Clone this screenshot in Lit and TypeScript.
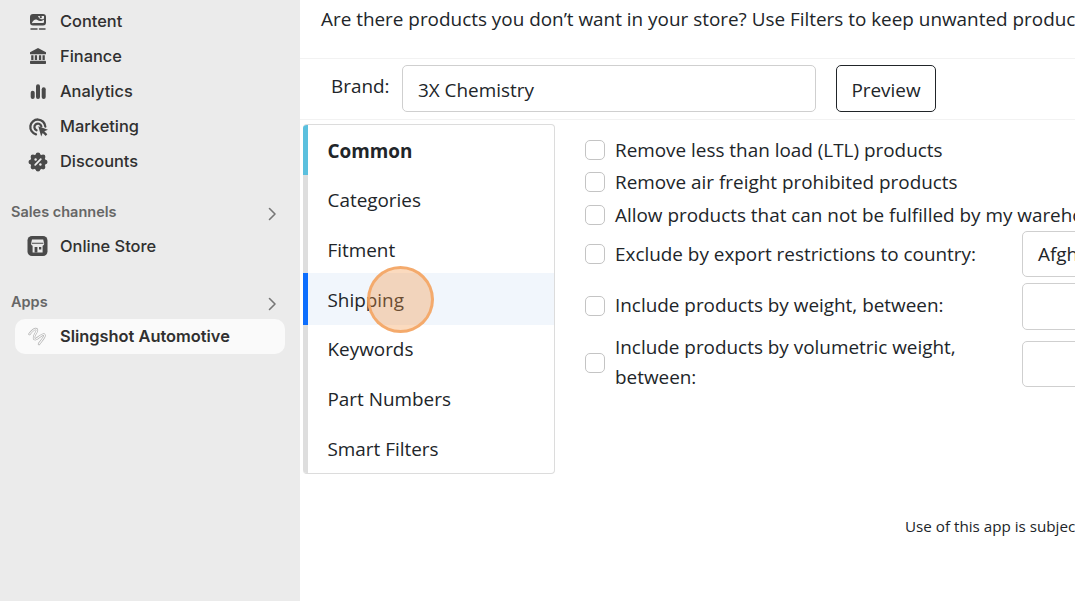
import { LitElement, html, css, svg } from "lit";
import { customElement } from "lit/decorators.js";

const DARK = "#4a4a4a";
const bumps = [0, 45, 90, 135, 180, 225, 270, 315].map((a) => {
  const r = (a * Math.PI) / 180;
  return svg`<circle cx="${10 + 7.2 * Math.cos(r)}" cy="${11 + 7.2 * Math.sin(r)}" r="2.3" fill="${DARK}"/>`;
});

const icons: Record<string, any> = {
  content: svg`<rect x="2" y="3" width="16" height="11.500" rx="3" fill="${DARK}"/><path fill="#ebebeb" d="M4 11.500c1.500-2.500 3-3.500 4.500-3 1.500.5 2 1.500 3.500 1.500s2.500-.5 4-1.500v2c0 1-.5 1.500-1.500 1.500h-9C4.500 12.500 4 12.200 4 11.500Z"/><path fill="#ebebeb" d="M10 5h6v2.500c-1 .8-2 1-3 .8-1.500-.3-2.500-1.800-3-3.300Z"/><circle cx="12.800" cy="6.200" r="1.100" fill="${DARK}"/><path stroke="${DARK}" stroke-width="1.500" stroke-linecap="round" d="M3 18h6M11.500 18h5.500"/>`,
  finance: svg`<path fill="${DARK}" d="M10 2 18 6.300V8.300H2V6.300L10 2ZM3.200 9.300h2.300v4.700H3.200zM6.800 9.300h2.300v4.700H6.800zM10.900 9.300h2.300v4.700h-2.300zM14.500 9.300h2.300v4.700h-2.300z"/><rect x="2" y="14.800" width="16" height="3.200" rx=".8" fill="${DARK}"/>`,
  analytics: svg`<rect x="2.700" y="9.700" width="4" height="8.300" rx="2" fill="${DARK}"/><rect x="8" y="3.300" width="4" height="14.700" rx="2" fill="${DARK}"/><rect x="13.700" y="6.300" width="4" height="11.700" rx="2" fill="${DARK}"/>`,
  marketing: svg`<path fill="none" stroke="${DARK}" stroke-width="2.300" stroke-linecap="round" d="M8 18.300A7.500 7.500 0 1 1 17.300 10.500M8.500 14.300a3.500 3.500 0 1 1 4.800-4"/><path fill="${DARK}" d="M10.300 10.300 20 13.800l-3.700 1.500 3 3-1.600 1.600-3-3-1.500 3.700Z"/>`,
  discounts: svg`<circle cx="10" cy="11" r="7.800" fill="${DARK}"/>${bumps}<path stroke="#ebebeb" stroke-width="1.800" stroke-linecap="round" d="M12.800 8.200l-5.600 5.600"/><circle cx="7.600" cy="8.500" r="1.200" fill="#ebebeb"/><circle cx="12.400" cy="13.500" r="1.200" fill="#ebebeb"/>`,
  store: svg`<rect x="-.5" y="0" width="20" height="20" rx="4.500" fill="${DARK}"/><path fill="#ebebeb" d="M4 3.500h11.200l1 4.200a2.300 2.300 0 0 1-1.600 2.100V16.500H4.600V9.800A2.300 2.300 0 0 1 3 7.700L4 3.500Z"/><path fill="${DARK}" d="M6.600 11h2.800v5.500H6.600zM11 11h2.300v2.500H11zM3.800 6.700h11.600v1H3.800z"/>`,
  app: svg`<path fill="none" stroke="#b0b0b0" stroke-width="2.400" stroke-linecap="round" stroke-linejoin="round" d="M1.500 8C4 5 6.500 2.500 8 3c2 .5.500 3-1 5.500C5.500 11 5.500 14 8 13c3-1.500 6-5 8-4.500 2 1-2 5.500-5 9.500"/><path fill="none" stroke="#fafafa" stroke-width="1.100" stroke-linecap="round" stroke-linejoin="round" d="M1.500 8C4 5 6.500 2.500 8 3c2 .5.500 3-1 5.500C5.500 11 5.500 14 8 13c3-1.500 6-5 8-4.500 2 1-2 5.500-5 9.500"/>`,
};

@customElement("app-root")
export class AppRoot extends LitElement {
  static styles = css`
    :host { display: block; width: 1075px; height: 601px; overflow: hidden; position: relative; background: #fff; }
    .page { display: flex; height: 601px; }
    .side { width: 300px; flex: none; background: #ebebeb; font-family: Inter, sans-serif; font-size: 16.400px; color: #303030; padding-top: 3px; box-sizing: border-box; font-weight: 450; }
    .item { display: flex; align-items: center; height: 35px; padding-left: 28px; gap: 12px; }
    .item svg { width: 20px; height: 20px; flex: none; overflow: visible; }
    .head { display: flex; align-items: center; justify-content: space-between; height: 34px; padding: 0 21px 0 11px; font-size: 14.500px; font-weight: 600; color: #666; }
    .head svg { width: 14px; height: 14px; margin-top: 5px; }
    .h1 { margin-top: 16px; }
    .h2 { margin-top: 21px; }
    .active { margin: 1px 15px 0; height: 35px; padding: 0 0 2px 13px; box-sizing: border-box; background: #fafafa; border-radius: 10px; font-weight: 600; gap: 12px; }
    .main { flex: 1; min-width: 0; font-family: "Open Sans", sans-serif; color: #212529; font-size: 18.900px; position: relative; white-space: nowrap; overflow: hidden; }
    .intro { height: 59px; padding: 5px 0 0 21px; box-sizing: border-box; line-height: 28px; border-bottom: 1px solid #f2f2f2; }
    .brand { display: flex; height: 61px; border-bottom: 1px solid #f2f2f2; box-sizing: border-box; align-items: flex-start; padding: 6px 0 0 31px; }
    .brand label { margin-top: 7px; width: 71px; flex: none; line-height: 28px; }
    .input { border: 1px solid #cfcfcf; border-radius: 5px; box-sizing: border-box; display: flex; align-items: center; }
    .brand .input { width: 414px; height: 47px; padding: 2px 0 0 15px; }
    .btn { margin-left: 20px; width: 100px; height: 47px; border: 1px solid #212529; border-radius: 5px; box-sizing: border-box; display: flex; align-items: center; justify-content: center; padding-top: 2px; }
    .body { display: flex; padding: 4px 0 0 3px; }
    .tabs { width: 252px; height: 350px; flex: none; border: 1px solid #dcdcdc; border-left: 0; border-radius: 4px; box-sizing: border-box; display: flex; flex-direction: column; overflow: hidden; }
    .tab { box-sizing: border-box; border-left: 5px solid #dedede; padding: 2px 0 0 19.500px; display: flex; align-items: center; }
    .tab.flat { padding-top: 0; }
    .tab.common { border-left-color: #5bc0de; font-weight: 700; }
    .tab.ship { border-left-color: #0d6efd; background: #f1f6fc; }
    .opts { margin: 10px 0 0 30px; display: flex; flex-direction: column; }
    .opt { display: flex; align-items: center; width: 600px; }
    .box { width: 20px; height: 20px; box-sizing: border-box; border: 1px solid #c4c4c4; border-radius: 5px; flex: none; margin-right: 10px; }
    .lbl { width: 407px; flex: none; line-height: 30px; }
    .lbl.wrap { white-space: normal; width: 380px; margin-right: 27px; }
    .opt.up .box { margin-bottom: 2px; }
    .opt.up .lbl { margin-bottom: 4px; }
    .opt .input { width: 140px; flex: none; padding-left: 15px; align-self: stretch; }
    .foot { position: absolute; left: 605px; top: 515px; font-size: 15.200px; line-height: 22px; }
    .cursor { position: absolute; left: 367px; top: 266px; width: 67px; height: 67px; box-sizing: border-box; border-radius: 50%; background: rgba(244, 150, 70, 0.35); border: 3px solid rgba(244, 165, 100, 0.9); }
  `;

  item(name: string, label: string) {
    return html`<div class="item"><svg viewBox="0 0 20 20">${icons[name]}</svg>${label}</div>`;
  }

  head(label: string, cls: string) {
    return html`<div class="head ${cls}">${label}<svg viewBox="0 0 14 14"><path fill="none" stroke="#777" stroke-width="1.600" stroke-linecap="round" stroke-linejoin="round" d="M4.500 1.500 10 7l-5.500 5.500"/></svg></div>`;
  }

  opt(label: string, h: number, mb: number, field?: string, cls = "", wrap = false) {
    return html`<div class="opt ${cls}" style="height:${h}px;margin-bottom:${mb}px"><span class="box"></span><span class="lbl ${wrap ? "wrap" : ""}">${label}</span>${field !== undefined ? html`<div class="input">${field}</div>` : ""}</div>`;
  }

  render() {
    const tabs: [string, number, string][] = [
      ["Common", 50, "common"],
      ["Categories", 50, "flat"],
      ["Fitment", 48, ""],
      ["Shipping", 52, "ship"],
      ["Keywords", 48, "flat"],
      ["Part Numbers", 50, ""],
      ["Smart Filters", 50, ""],
    ];
    return html`
      <div class="page">
        <nav class="side">
          ${this.item("content", "Content")}
          ${this.item("finance", "Finance")}
          ${this.item("analytics", "Analytics")}
          ${this.item("marketing", "Marketing")}
          ${this.item("discounts", "Discounts")}
          ${this.head("Sales channels", "h1")}
          ${this.item("store", "Online Store")}
          ${this.head("Apps", "h2")}
          <div class="item active"><svg viewBox="0 0 20 20">${icons.app}</svg>Slingshot Automotive</div>
        </nav>
        <main class="main">
          <div class="intro">Are there products you don’t want in your store? Use Filters to keep unwanted products out of your store.</div>
          <div class="brand">
            <label>Brand:</label>
            <div class="input">3X Chemistry</div>
            <div class="btn">Preview</div>
          </div>
          <div class="body">
            <div class="tabs">
              ${tabs.map(([t, h, c]) => html`<div class="tab ${c}" style="height:${h}px">${t}</div>`)}
            </div>
            <div class="opts">
              ${this.opt("Remove less than load (LTL) products", 32, 0)}
              ${this.opt("Remove air freight prohibited products", 32, 0)}
              ${this.opt("Allow products that can not be fulfilled by my warehouse", 33, 0)}
              ${this.opt("Exclude by export restrictions to country:", 46, 6, "Afghanistan")}
              ${this.opt("Include products by weight, between:", 47, 11, "", "up")}
              ${this.opt("Include products by volumetric weight, between:", 46, 0, "", "up", true)}
            </div>
          </div>
          <div class="foot">Use of this app is subject to our Terms of Service</div>
        </main>
      </div>
      <div class="cursor"></div>
    `;
  }
}
